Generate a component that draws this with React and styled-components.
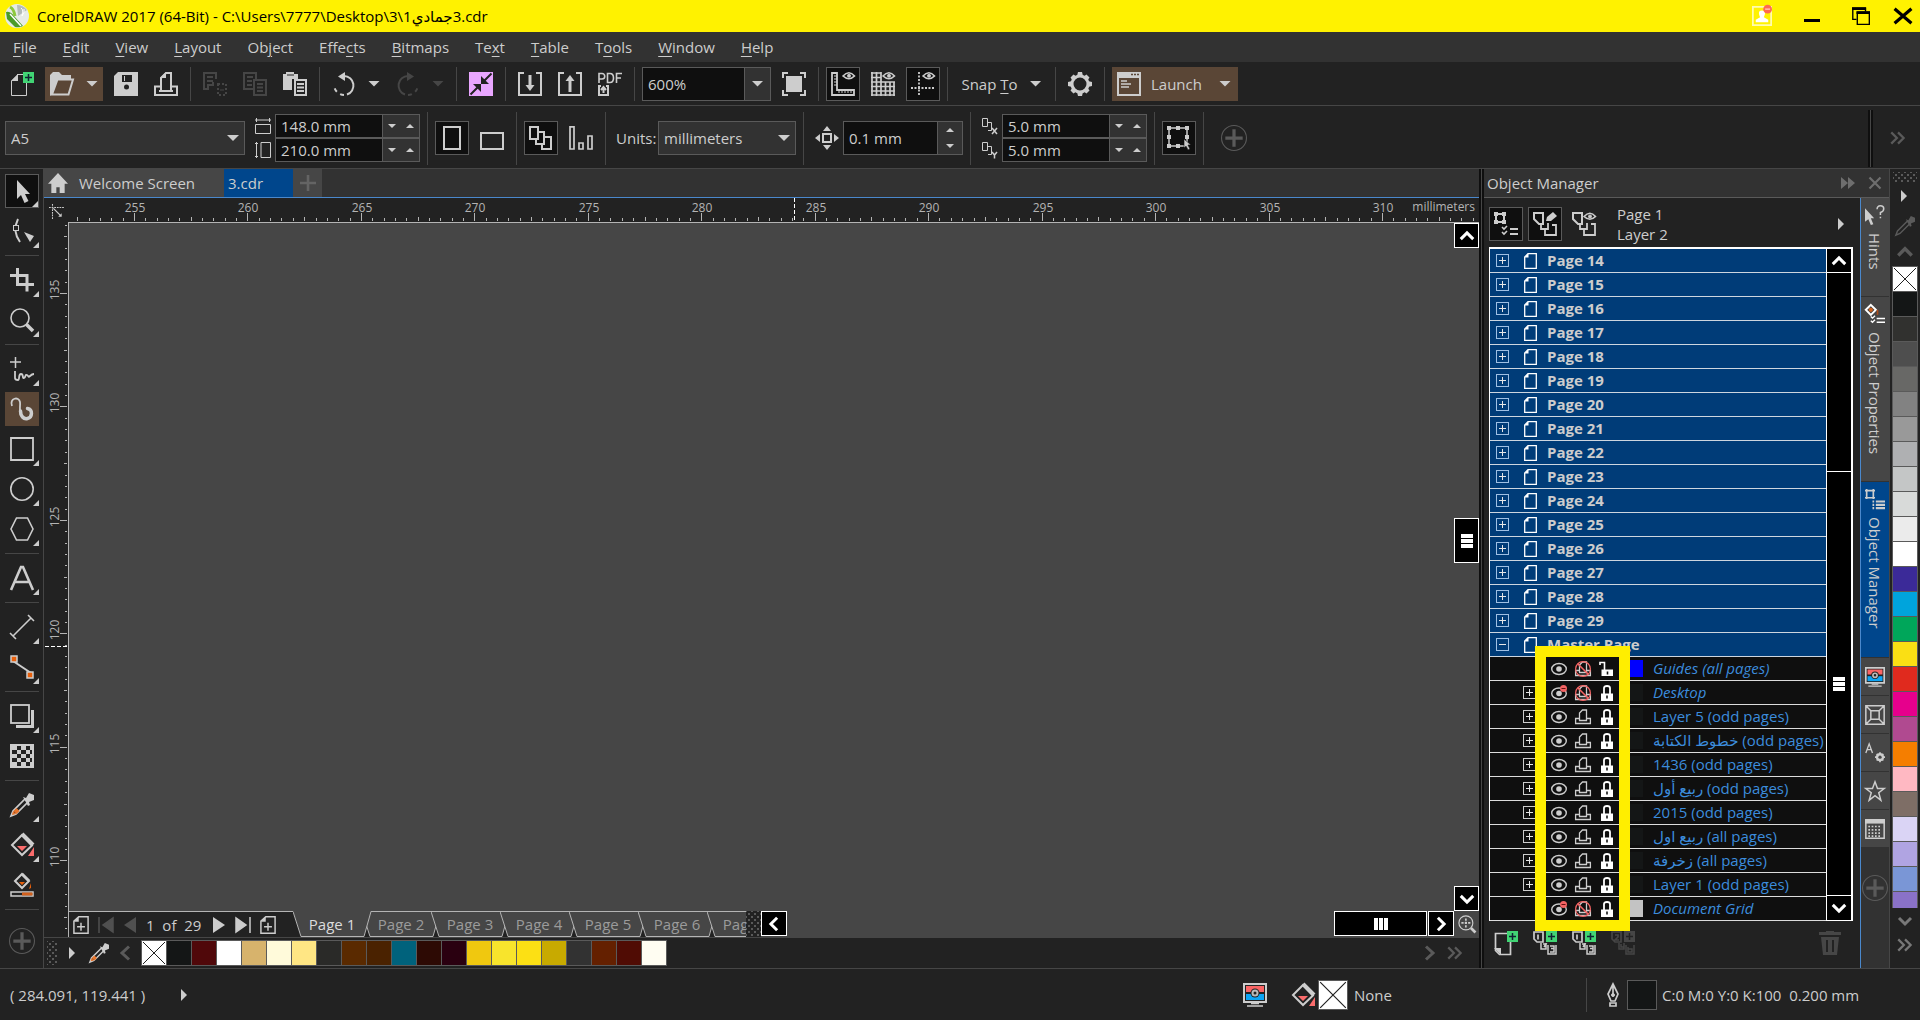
import React from 'react'
import { useState } from 'react'
import styled, { createGlobalStyle, css } from 'styled-components'

// ---- data ----
const menus = [
  ['', 'F', 'ile'], ['', 'E', 'dit'], ['', 'V', 'iew'], ['', 'L', 'ayout'],
  ['Ob', 'j', 'ect'], ['Effe', 'c', 'ts'], ['', 'B', 'itmaps'], ['Te', 'x', 't'],
  ['', 'T', 'able'], ['T', 'o', 'ols'], ['', 'W', 'indow'], ['', 'H', 'elp'],
]

const pages = [14, 15, 16, 17, 18, 19, 20, 21, 22, 23, 24, 25, 26, 27, 28, 29]

const layers = [
  { name: 'Guides', scope: '(all pages)', italic: true, noPrint: true, unlocked: true, leaf: true, color: '#0000ff' },
  { name: 'Desktop', scope: '', italic: true, hidden: true, noPrint: true },
  { name: 'Layer 5', scope: '(odd pages)' },
  { name: 'خطوط الكتابة', scope: '(odd pages)' },
  { name: '1436', scope: '(odd pages)' },
  { name: 'ربيع أول', scope: '(odd pages)' },
  { name: '2015', scope: '(odd pages)' },
  { name: 'ربيع اول', scope: '(all pages)' },
  { name: 'زخرفة', scope: '(all pages)' },
  { name: 'Layer 1', scope: '(odd pages)' },
  { name: 'Document Grid', scope: '', italic: true, hidden: true, noPrint: true, leaf: true, color: '#c3c3c3' },
]

const documentColors = [
  '#141616', '#50080a', '#ffffff', '#d7b36c', '#fffada', '#ffe684', '#2a2a28',
  '#5a2a00', '#4a2200', '#00627c', '#2d0a04', '#2a0010', '#f0c80f', '#f8e42c', '#fce014',
  '#c8aa00', '#323232', '#642000', '#500c04', '#fffdf2',
]

const paletteColors = [
  '#141616', '#31312f', '#4e4e4e', '#686866', '#828282', '#999999', '#afb0b2', '#c4c6c6',
  '#d8dad9', '#ebebeb', '#ffffff', '#3b2a98', '#00a4dc', '#00a65a', '#fadf14', '#e02a1e',
  '#e6008c', '#b04a90', '#f57e00', '#ffb8c2', '#7e6e66', '#dad4f5', '#b0a4e2', '#7a96d6', '#8a72c8',
]

// ---- icons, drawn on a 24 grid unless listed in small ----
const icons = {
  newDoc: <><path d="M7 2.5h7M14 2.5H8L1.5 9v14.5h15V11" /><path d="M1 9l7-7v7z" fill="currentColor" stroke="none" /><rect x="13" y="0" width="11" height="11" fill="#41d474" stroke="none" /><path d="M18.5 2v7M15 5.500h7" stroke="#123" strokeWidth="1.500" /></>,
  open: <><path d="M0 24V3l3-3h6l3 3h9v4" fill="currentColor" stroke="none" /><path d="M2 22.500L7.500 7.500H23L18.500 22.500z" fill="#5a4636" strokeWidth="2" /></>,
  save: <><path d="M4 0h20v24H0V4z" fill="currentColor" stroke="none" /><path d="M8 3h10v7H8z" fill="#222" stroke="none" /><path d="M10.500 4v5" /><circle cx="12.500" cy="15" r="2.500" fill="#222" stroke="none" /></>,
  print: <><path d="M6 14.500H1V23h22v-8.500h-5M5 19h14" strokeWidth="2" /><path d="M7 18V6l5-5h5v17" strokeWidth="2" /><path d="M6 6l6-6v6z" fill="currentColor" stroke="none" /></>,
  cut: <><path d="M13 7V1H1v16h4V13h5v-3M4 5h6M4 9h6" strokeWidth="2" /><path d="M15 12h8v11h-8z" strokeDasharray="2 2" strokeWidth="2" /><path d="M17 18h4" /></>,
  copy: <><path d="M13 7V1H1v16h9M4 5h6M4 9h5M4 13h5" strokeWidth="2" /><path d="M11 8h12v15H11zM14 12h6M14 15.500h6M14 19h6" strokeWidth="2" /></>,
  paste: <><path d="M0 2h3V0h8v2h4v5H9v11H0z" fill="currentColor" stroke="none" /><path d="M4 3h7" stroke="#222" /><path d="M12 8h11v15H12zM14 12h7M14 15.500h7M14 19h7" strokeWidth="2" /></>,
  undo: <><path d="M12 4A9.500 9.500 0 0 1 15 22.500" strokeWidth="2" /><path d="M12 23A10.500 10.500 0 0 1 2 13" strokeWidth="2" strokeDasharray="4 4" /><path d="M6 4.500L13 0v9z" fill="currentColor" stroke="none" /></>,
  redo: <><path d="M12 4A9.500 9.500 0 0 0 9 22.500" strokeWidth="2" /><path d="M12 23A10.500 10.500 0 0 0 22 13" strokeWidth="2" strokeDasharray="4 4" /><path d="M18 4.500L11 0v9z" fill="currentColor" stroke="none" /></>,
  search: <><rect width="24" height="24" fill="#e9a6ff" stroke="none" /><path d="M22.500 1.500L15 9M1.500 22.500L9 15" stroke="#222" strokeWidth="2" /><path d="M12 4v8h8zM12 20v-8H4z" fill="#222" stroke="none" /></>,
  import: <><path d="M6 1H1v22h22V1h-5" strokeWidth="2" /><path d="M12 3v12" strokeWidth="3" /><path d="M7.500 13h9L12 19z" fill="currentColor" stroke="none" /></>,
  export: <><path d="M6 1H1v22h22V1h-5" strokeWidth="2" /><path d="M12 8v12" strokeWidth="3" /><path d="M7.500 9h9L12 3z" fill="currentColor" stroke="none" /></>,
  pdf: <><path d="M1 11V1.500h3a2.500 2.500 0 0 1 0 5.500H1M9.500 1.500h2.500c2 0 3.500 1.500 3.500 4.500s-1.500 4.500-3.500 4.500H9.500zM18.500 11V1.500H24M18.500 6H23" strokeWidth="1.600" /><path d="M3 14H1v9h9v-9H8M5.500 16v5M3 18l2.500-3L8 18" strokeWidth="2" /></>,
  fullscreen: <><path d="M1 6V1h5M18 1h5v5M23 18v5h-5M6 23H1v-5" strokeWidth="2" /><path d="M4 4h16v16H4z" fill="currentColor" stroke="none" /></>,
  rulers: <><path d="M1 1h5v17h17v5H1z" strokeWidth="1.800" /><path d="M3 4h3M3 7h3M3 10h3M3 13h3M8 18v3M11 18v3M14 18v3M17 18v3M20 18v3" /><path d="M12 4Q18 -2.500 23.500 4Q18 9.500 12 4z" strokeWidth="1.600" /><circle cx="18" cy="3.700" r="1.500" fill="currentColor" /></>,
  grid: <><path d="M1 0v24M5.500 0v24M10 0v24M14.500 10v14M19 10v14M23 10v14M0 1h10M0 5.500h10M0 10h24M0 14.500h24M0 19h24M0 23h24" strokeWidth="1.700" /><path d="M12 4Q18 -2.500 23.500 4Q18 9.500 12 4z" strokeWidth="1.600" /><circle cx="18" cy="3.700" r="1.500" fill="currentColor" /></>,
  guides: <><path d="M8 0v24M0 16h24" strokeWidth="1.800" strokeDasharray="2 1.500" /><path d="M12 4Q18 -2.500 23.500 4Q18 9.500 12 4z" strokeWidth="1.600" /><circle cx="18" cy="3.700" r="1.500" fill="currentColor" /></>,
  gear: <><circle cx="12" cy="12" r="8" strokeWidth="3" /><path d="M10 0h4l1 4H9zM10 24h4l1-4H9zM0 10v4l4 1V9zM24 10v4l-4 1V9zM2.500 5.500l3-3 3 2-4 4zM21.500 5.500l-3-3-3 2 4 4zM2.500 18.500l3 3 3-2-4-4zM21.500 18.500l-3 3-3-2 4-4z" fill="currentColor" stroke="none" /></>,
  launch: <><path d="M1 1h22v22H1z" strokeWidth="2" /><path d="M1 4h22" strokeWidth="4" /><path d="M14 2.500h2M17 2.500h2M20 2.500h2" stroke="#5a4636" strokeWidth="1.500" /><path d="M4 9h6M4 12h10M4 15h8" strokeWidth="1.600" /></>,
  portrait: <path d="M4 1h16v22H4z" strokeWidth="2" />,
  landscape: <path d="M1 7h22v16H1z" strokeWidth="2" />,
  allPages: <><path d="M1 1h8v12H1z" strokeWidth="2" /><path d="M9 6h6v12H7v-5" strokeWidth="2" /><path d="M15 11h7v12h-9v-5" strokeWidth="2" /></>,
  curPage: <path d="M1 .900h4v22.100H1zM10 17h4v6h-4zM19 10h4v13h-4z" strokeWidth="1.700" />,
  nudge: <><path d="M8 8h8v8H8z" strokeWidth="2" /><path d="M12 0l4 5H8zM12 24l4-5H8zM0 12l5-4v8zM24 12l-5-4v8z" fill="currentColor" stroke="none" /></>,
  treat: <><path d="M2 2h18v18H2z" strokeWidth="1.500" /><path d="M0 0h4v4H0zM9 0h4v4H9zM18 0h4v4h-4zM0 9h4v4H0zM18 9h4v4h-4zM0 18h4v4H0zM9 18h4v4H9z" fill="currentColor" stroke="none" /><path d="M17 13v9l2-2 2 4 2-1-2-4h3z" fill="currentColor" stroke="#0f0f0f" strokeWidth=".6" /></>,
  plusCircle: <><circle cx="12" cy="12" r="11.500" /><path d="M12 4v16M4 12h16" strokeWidth="3" /></>,
  pick: <path d="M7 1v19l4-4 3.500 8 4-2-3.500-7h5z" fill="currentColor" stroke="none" />,
  shape: <><path d="M8 0Q2 12 10 23" strokeWidth="2" /><rect x="3.500" y="6.500" width="5" height="5" fill="#222" /><path d="M14 13l10 4-4 6z" fill="currentColor" stroke="none" /></>,
  crop: <path d="M0 7.500h17v16M7.500 0v16.500H24" strokeWidth="3" />,
  zoom: <><circle cx="10" cy="10" r="9" strokeWidth="1.600" /><path d="M16.500 16.500l6.500 6.500" strokeWidth="3.500" /></>,
  freehand: <><path d="M0 5h11M5.500 0v11" strokeWidth="1.500" /><path d="M5 14v7q0 2 3 2c2 0 0-6 3-6s1 5 3 4 1-4 3-3 1 3 3 1 2-2 4-2" strokeWidth="1.800" /></>,
  artistic: <><path d="M2 9C-1 1 9-1 10 5c.7 5-1.500 9 1 14" strokeWidth="1.800" /><path d="M10.500 14c0 5 3 8.500 7 7.500 5-1 5.500-9 0-10" strokeWidth="3.500" strokeLinecap="round" /></>,
  rect: <path d="M1 1h22v22H1z" strokeWidth="1.800" />,
  ellipse: <circle cx="12" cy="12" r="11.200" strokeWidth="1.600" />,
  polygon: <path d="M6.500 1h11L23 12l-5.500 11h-11L1 12z" strokeWidth="1.600" />,
  text: <path d="M1 24L11 1h2l10 23M5 16h14" strokeWidth="2.600" />,
  dimension: <path d="M3 21L21 3M0 18l6 6M18 0l6 6" strokeWidth="1.600" />,
  connector: <><path d="M3 6l18 12" strokeWidth="2" /><path d="M1 1h6v6H1zM17 17h6v6h-6z" fill="#e8600c" strokeWidth="1.500" /></>,
  shadow: <><path d="M22.500 6v16.500H6" strokeWidth="3" /><rect x="1" y="1" width="18" height="18" fill="#222" strokeWidth="1.800" /></>,
  checker: <><path d="M1 1h22v22H1z" strokeWidth="2" /><path d="M7 2h4v4H7zM16 2h4v4h-4zM2 6h5v4H2zM11 6h5v4h-5zM20 6h2v4h-2zM7 10h4v4H7zM16 10h4v4h-4zM2 14h5v4H2zM11 14h5v4h-5zM20 14h2v4h-2zM7 18h4v4H7zM16 18h4v4h-4z" fill="#222" stroke="none" /><path d="M2 2h5v4H2zM11 2h5v4h-5zM20 2h2v4h-2zM7 6h4v4H7zM16 6h4v4h-4zM2 10h5v4H2zM11 10h5v4h-5zM20 10h2v4h-2zM7 14h4v4H7zM16 14h4v4h-4zM2 18h5v4H2zM11 18h5v4h-5zM20 18h2v4h-2z" fill="currentColor" stroke="none" /></>,
  dropper: <><path d="M1 23l2-5L15 6l3 3L6 21z" strokeWidth="1.700" /><path d="M2 22l1-4 3 3z M3.500 18l3-3 3 3-3 3z" fill="#e8742a" stroke="none" /><path d="M13 4l3 1 3-5 5 2v5l-5 2 1 3-2 1z" fill="currentColor" stroke="none" /></>,
  dropperDim: <><path d="M1 23l2-5L15 6l3 3L6 21z" strokeWidth="1.700" /><path d="M13 4l3 1 3-5 5 2v5l-5 2 1 3-2 1z" fill="currentColor" stroke="none" /></>,
  fill: <><path d="M12 2L22 12.500 12 22 2 12z" strokeWidth="2" /><path d="M12 1l11 11" strokeWidth="4" /><path d="M7 13h10l-5 5zM18 23h6v-9z" fill="#fa6c6c" stroke="none" /></>,
  smartFill: <><path d="M12 1l7 7-7 7-7-7z" strokeWidth="2" /><path d="M12 1l7 7" strokeWidth="3" /><path d="M9 9h6l-3 3zM19 16l2-6v5z" fill="#e8600c" stroke="none" /><path d="M1 19h22v4H1z" strokeWidth="1.500" /><path d="M12 19.500h10.500v3H12z" fill="#d2601c" stroke="none" /></>,
  home: <path d="M0 13L12 0l12 13h-4v11h-6v-7h-4v7H4V13z" fill="currentColor" stroke="none" />,
  objProps: <><path d="M2 2h8v8H2z" strokeWidth="2" /><path d="M0 0h4v4H0zM8 0h4v4H8zM0 8h4v4H0zM8 8h4v4H8z" fill="currentColor" stroke="none" /><path d="M8 15l2 2 3-3M8 20l2 2 3-3" strokeWidth="1.600" /><path d="M16 17h8M16 22h8" strokeWidth="1.800" /></>,
  editLayers: <><path d="M1 1h9v11H6l-5-5z" strokeWidth="2" /><path d="M8 12v5h7v-6M12 18v5h11V13h-4" strokeWidth="1.800" /><path d="M13 9l1-4 6-5 4 4-6 5z" fill="currentColor" stroke="none" /></>,
  viewLayers: <><path d="M1 1h9v11H6l-5-5z" strokeWidth="2" /><path d="M8 12v5h7v-6M12 18v5h11V12h-4" strokeWidth="1.800" /><path d="M12 4.500Q18 -2 23.500 4.500Q18 10 12 4.500z" fill="#222" strokeWidth="1.600" /><circle cx="18" cy="4.500" r="1.500" fill="currentColor" /></>,
  newLayer: <><path d="M13 2.500H1.500v17l4 4h11V11" strokeWidth="1.700" /><path d="M0 17h7v7z" fill="currentColor" stroke="none" /><rect x="13" y="0" width="11" height="11" fill="#41d474" stroke="none" /><path d="M18.500 2v7M15 5.500h7" stroke="#123" strokeWidth="1.500" /></>,
  newMaster: <><path d="M1 1h9v10H4l-3-3zM5 3.500v5" strokeWidth="1.700" /><path d="M8 12v6h5v-6M10 13h3l-2 3" strokeWidth="1.500" /><path d="M15 14v9h8v-9M17 15h4v2.500h-3M21 17.500V21h-4" strokeWidth="1.500" /><rect x="13" y="0" width="11" height="11" fill="#41d474" stroke="none" /><path d="M18.500 2v7M15 5.500h7" stroke="#123" strokeWidth="1.500" /></>,
  newMasterDim: <><path d="M1 1h9v10H4l-3-3zM4 4h3v2L4 9h4" strokeWidth="1.700" /><path d="M8 12v6h5v-6M10 13v3h3" strokeWidth="1.500" /><path d="M15 14v9h8v-9M17 16v5h4v-3h-4" strokeWidth="1.500" /><path d="M13 0h11v11H13z" fill="currentColor" stroke="none" /><path d="M18.500 2v7M15 5.500h7" stroke="#222" strokeWidth="1.500" /></>,
  trash: <><path d="M1 1h22v3H1zM8 0h8v2H8z" fill="currentColor" stroke="none" /><path d="M3 6h18l-2 18H5z" fill="currentColor" stroke="none" /><path d="M9 9v12M15 9v12" stroke="#222" strokeWidth="2" /></>,
  hints: <><path d="M0 4v16l4-3 3 7 3-1-3-7h4z" fill="currentColor" stroke="none" /><path d="M14.500 5q0-4 4-4t4 3.500-4 4.500v3M18.500 14v2" strokeWidth="1.800" /></>,
  propsDocker: <><path d="M7 1l6 6-6 6-6-6z" strokeWidth="2.400" stroke="#fff" /><circle cx="7" cy="7" r="2.500" fill="#d2601c" stroke="none" /><path d="M15 7v6" stroke="#a84c1c" strokeWidth="2" /><path d="M7 15l2 2 3-3M7 20l2 2 3-3" strokeWidth="1.600" stroke="#fff" /><path d="M14 17.500h10M14 22h10" strokeWidth="1.800" stroke="#fff" /></>,
  objDocker: <><path d="M2 0v12M10 0v12M0 2h12M0 10.500h12" strokeWidth="2" /><path d="M9 15h2M9 19h2M9 23h2M13 15h11M13 19h11M13 23h11" strokeWidth="2.600" /></>,
  monitor: <><path d="M1 1h22v18H1z" fill="#222" strokeWidth="2" /><path d="M3 3h18v6H3z" fill="#fa6464" stroke="none" /><path d="M3 11h18v6H3z" fill="#0ca4f4" stroke="none" /><circle cx="12" cy="10" r="4.500" fill="#222" stroke="none" /><circle cx="12" cy="10" r="2.500" strokeWidth="2" stroke="#bbb" /><path d="M8 20.500h8M4 23h16" strokeWidth="1.500" /></>,
  bevel: <path d="M1 1h22v22H1zM7 7h10v10H7zM1 1l6 6M23 1l-6 6M1 23l6-6M23 23l-6-6" strokeWidth="1.800" />,
  textGear: <><path d="M1 12L5 1l4 11M2 8h6" strokeWidth="1.600" /><circle cx="18" cy="17" r="3.500" strokeWidth="3" /><path d="M18 11v12M12 17h12M14 13l8 8M22 13l-8 8" strokeWidth="2" /><circle cx="18" cy="17" r="2" fill="#464646" stroke="none" /></>,
  star: <path d="M12 1l3 8h8l-6.500 5 2.500 9-7-5.500L5 23l2.500-9L1 9h8z" strokeWidth="1.800" />,
  table: <><path d="M1 1h22v22H1z" strokeWidth="1.800" /><path d="M0 3h24" strokeWidth="5" /><path d="M4 9h16M4 13h16M4 17h16M4 20.500h16" strokeWidth="2" strokeDasharray="2 2" /></>,
  pen: <><path d="M12 1L7 11l3 7h4l3-7zM12 2v10M9 20h6v3H9z" strokeWidth="1.700" /><circle cx="12" cy="12" r="1.500" fill="currentColor" /></>,
  // 16 grid
  pageWidth: <path d="M0 2h16M1.500 0v4M14.500 0v4M.500 6.500h15v9H.500z" />,
  pageHeight: <path d="M1.500 0v16M0 1.500h3M0 14.500h3M6 .500h9.500v15H6z" />,
  dupX: <><path d="M.500 .500h5v8h-5zM5.500 4.500h4v8H6" /><path d="M10 10l5 6M15 10l-5 6" strokeWidth="1.500" /></>,
  dupY: <><path d="M.500 .500h5v8h-5zM5.500 4.500h4v8H6" /><path d="M10 10l2.500 3L15 10M12.500 13v3.500" strokeWidth="1.500" /></>,
  eye: <><ellipse cx="8" cy="8" rx="7.300" ry="5.500" strokeWidth="1.400" /><circle cx="8" cy="8" r="2.800" fill="currentColor" stroke="none" /></>,
  eyeOff: <><ellipse cx="8" cy="8.500" rx="7.300" ry="5.500" strokeWidth="1.400" /><circle cx="8" cy="8.500" r="2.800" fill="currentColor" stroke="none" /><circle cx="12.500" cy="3.500" r="3.500" fill="#f46464" stroke="none" /><path d="M10.500 3.500h4" stroke="#611" /></>,
  layerPrint: <path d="M4 9.500H.600v5h14.800v-5H12M4.500 11.500V4l3-3h4v10.500z" strokeWidth="1.300" />,
  layerNoPrint: <><path d="M4 9.500H.600v5h14.800v-5H12M4.500 11.500V4l3-3h4v10.500z" strokeWidth="1.300" /><circle cx="8" cy="8" r="7.400" stroke="#f46464" strokeWidth="1.200" /><path d="M3 3l10 10" stroke="#f46464" strokeWidth="1.600" /></>,
  lock: <><path d="M5 9V3q0-2 3-2t3 2v6" stroke="#fff" strokeWidth="1.800" /><path d="M2 8.500h12V16H2z" fill="#fff" stroke="none" /><path d="M8 10.500v3" stroke="#111" strokeWidth="1.600" /></>,
  unlock: <><path d="M1 4V1.500h4.500V9" stroke="#fff" strokeWidth="1.600" /><path d="M2.500 8.500H14V15H2.500z" fill="#fff" stroke="none" /><path d="M8.500 10.500v3" stroke="#111" strokeWidth="1.600" /></>,
  page: <><path d="M5 .700h8.300v14.600H1.700V4z" strokeWidth="1.300" stroke="#fff" /><path d="M1.500 4.500l4-4v4z" fill="#fff" stroke="none" /></>,
  addPage: <><path d="M6 .700h8.300v14.600H1.700V4.500zM8 6v7M4.500 9.500h7" strokeWidth="1.300" /><path d="M1.500 5l4.500-4.500V5z" fill="currentColor" stroke="none" /></>,
  first: <path d="M1 0v16M15 1v14L5 8z" fill="currentColor" strokeWidth="1.500" />,
  prev: <path d="M14 0v16L2 8z" fill="currentColor" stroke="none" />,
  next: <path d="M2 0v16l12-8z" fill="currentColor" stroke="none" />,
  last: <path d="M15 0v16M1 1v14l10-7z" fill="currentColor" strokeWidth="1.500" />,
  up: <path d="M3 10.500l5-5 5 5" strokeWidth="2.400" />,
  down: <path d="M3 5.500l5 5 5-5" strokeWidth="2.400" />,
  left: <path d="M10.500 3l-5 5 5 5" strokeWidth="2.400" />,
  right: <path d="M5.500 3l5 5-5 5" strokeWidth="2.400" />,
  bigUp: <path d="M2 12l6-6 6 6" strokeWidth="3" />,
  bigDown: <path d="M2 4l6 6 6-6" strokeWidth="3" />,
  bigLeft: <path d="M12 1.500L5 8l7 6.500" strokeWidth="3" />,
  bigRight: <path d="M4 1.500L11 8l-7 6.500" strokeWidth="3" />,
  dbl: <path d="M2 3l5 5-5 5M8 3l5 5-5 5" strokeWidth="2" />,
  collapse: <path d="M1 2v12l7-6zM8 2v12l7-6z" fill="currentColor" stroke="none" />,
  close: <path d="M2.500 2.500l11 11M13.500 2.500l-11 11" strokeWidth="2.200" />,
  play: <path d="M4 2l6 6-6 6z" fill="currentColor" stroke="none" />,
  magnifier: <><circle cx="7" cy="7" r="6.200" /><path d="M11.500 11.500l4 4" strokeWidth="2.400" /><path d="M7 3v8M3 7h8" strokeWidth="1.500" strokeDasharray="2 1" /></>,
  plus: <path d="M8 0v16M0 8h16" strokeWidth="2.600" />,
  origin: <><path d="M4 0v18M0 4h18" strokeWidth="1.200" strokeDasharray="2 1" /><path d="M5 5l8 8" strokeWidth="1.500" /><path d="M14.500 14.500v-4l-4 4z" fill="currentColor" stroke="none" /></>,
  user: <><path d="M.700 .700h14.600v14.600H.700z" stroke="#fffbb0" strokeWidth="1.400" /><path d="M8 3.500c4 0 2 4 1.500 5.500l3.500 2V13H3v-2l3.500-2C6 7.500 4 3.500 8 3.500z" fill="#fff" stroke="none" /><circle cx="12.500" cy="2.500" r="3.500" fill="#ff6a50" stroke="none" /><path d="M10.500 2.500h4" stroke="#ffd0c0" /></>,
  minimize: <path d="M0 12.500h16" strokeWidth="3" />,
  restore: <><path d="M4 11H.700V1H12v3" strokeWidth="1.200" /><path d="M0 1.500h12.500M4 5h12" strokeWidth="2.500" /><path d="M4.700 4.700h10.700v10.700H4.700z" strokeWidth="1.200" /></>,
  winClose: <path d="M.500 1.500l15 13M15.500 1.500l-15 13" strokeWidth="2.800" />,
}

const small = ['pageWidth', 'pageHeight', 'dupX', 'dupY', 'eye', 'eyeOff', 'layerPrint', 'layerNoPrint', 'lock', 'unlock',
  'page', 'addPage', 'first', 'prev', 'next', 'last', 'up', 'down', 'left', 'right', 'bigUp', 'bigDown', 'bigLeft', 'bigRight',
  'dbl', 'collapse', 'close', 'play', 'magnifier', 'plus', 'origin', 'user', 'minimize', 'restore', 'winClose']

const Icon = ({ name, size = 24 }) => (
  <Svg viewBox={small.includes(name) ? '0 0 16 16' : '0 0 24 24'} $size={size} aria-hidden="true">{icons[name]}</Svg>
)

// ---- small pieces ----
const Tool = ({ icon, label, active, hot, dim, flyout, size }) => (
  <ToolButton type="button" aria-label={label} $active={active} $hot={hot} $dim={dim} $flyout={flyout}>
    <Icon name={icon} size={size} />
  </ToolButton>
)

const Spin = ({ label, value, width = 107, stacked }) => {
  const [text, setText] = useState(value)
  return (
    <SpinBox>
      <SpinInput aria-label={label} value={text} $width={width} onChange={e => setText(e.target.value)} />
      <SpinButtons $stacked={stacked}>
        <button type="button" aria-label={`${label} down`}><Caret $small /></button>
        <button type="button" aria-label={`${label} up`}><Caret $small $up /></button>
      </SpinButtons>
    </SpinBox>
  )
}

const NoColor = () => (
  <CrossSvg viewBox="0 0 24 24" aria-hidden="true"><path d="M1 1l22 22M23 1L1 23" /></CrossSvg>
)

// ---- rulers: 5 mm are 113.45 px at this zoom ----
const STEP = 113.45

const HRuler = () => {
  const ticks = []
  for (let i = -5; i < 170; i++) {
    const x = Math.round(65 + (i * STEP) / 10)
    const len = i % 10 === 0 ? 8 : i % 5 === 0 ? 4 : 3
    ticks.push(<rect key={i} x={x} y={23 - len} width="1" height={len} />)
  }
  const labels = [255, 260, 265, 270, 275, 280, 285, 290, 295, 300, 305, 310]
  return (
    <HRulerBox>
      <RulerSvg>
        {ticks}
        {labels.map((n, i) => <text key={n} x={Math.round(66 + i * STEP)} y="14" textAnchor="middle">{n}</text>)}
        <line x1="725.500" x2="725.500" y1="0" y2="24" />
      </RulerSvg>
      <RulerUnit>millimeters</RulerUnit>
    </HRulerBox>
  )
}

const VRuler = () => {
  const ticks = []
  for (let i = -6; i < 57; i++) {
    const y = Math.round(70 + (i * STEP) / 10)
    const len = i % 10 === 0 ? 7 : i % 5 === 0 ? 3 : 2
    ticks.push(<rect key={i} x={23 - len} y={y} width={len} height="1" />)
  }
  return (
    <VRulerBox>
      <RulerSvg>
        {ticks}
        {[135, 130, 125, 120, 115, 110].map((n, i) => (
          <text key={n} textAnchor="middle" transform={`translate(15 ${Math.round(67 + i * STEP)}) rotate(-90)`}>{n}</text>
        ))}
        <line x1="1" x2="23" y1="423.500" y2="423.500" />
      </RulerSvg>
    </VRulerBox>
  )
}

const TitleBar = () => (
  <Title>
    <Svg viewBox="0 0 24 24" $size={24} aria-hidden="true">
      <ellipse cx="12" cy="12" rx="12" ry="12" fill="#e6ebe6" stroke="none" />
      <path d="M12 1l1 11 9-6Q18 1 12 1z" fill="#b4bcb8" stroke="none" />
      <path d="M16 4q3 2 1 8M19 5q1 3-2 7" stroke="#fff" />
      <path d="M1 8q4-1 8 4l9 10q-4 2-8 1L2 15z" fill="#4a9c28" stroke="none" />
      <path d="M5 10l11 12" stroke="#fff" strokeWidth="1.500" />
      <path d="M5 3q4 2 5 9" stroke="#8cc83c" strokeWidth="3" />
    </Svg>
    <TitleText>CorelDRAW 2017 (64-Bit) - C:\Users\7777\Desktop\3\1<bdi>جمادي</bdi>3.cdr</TitleText>
    <WindowButtons>
      <button type="button" aria-label="Account"><Icon name="user" size={20} /></button>
      <button type="button" aria-label="Minimize"><Icon name="minimize" size={16} /></button>
      <button type="button" aria-label="Restore"><Icon name="restore" size={18} /></button>
      <button type="button" aria-label="Close"><Icon name="winClose" size={18} /></button>
    </WindowButtons>
  </Title>
)

const StandardBar = () => (
  <Bar>
    <Tool icon="newDoc" label="New" />
    <WideButton type="button" aria-label="Open" $hot><Icon name="open" /><Caret /></WideButton>
    <Tool icon="save" label="Save" />
    <Tool icon="print" label="Print" />
    <Sep />
    <Tool icon="cut" label="Cut" dim />
    <Tool icon="copy" label="Copy" dim />
    <Tool icon="paste" label="Paste" />
    <Sep />
    <WideButton type="button" aria-label="Undo"><Icon name="undo" /><Caret /></WideButton>
    <WideButton type="button" aria-label="Redo" $dim><Icon name="redo" /><Caret /></WideButton>
    <Sep />
    <Tool icon="search" label="Search content" />
    <Sep />
    <Tool icon="import" label="Import" />
    <Tool icon="export" label="Export" />
    <Tool icon="pdf" label="Publish to PDF" />
    <Sep />
    <ZoomBox>
      <input aria-label="Zoom level" defaultValue="600%" />
      <button type="button" aria-label="Zoom levels"><Caret /></button>
    </ZoomBox>
    <Tool icon="fullscreen" label="Full-screen preview" />
    <Sep />
    <Tool icon="rulers" label="Show rulers" active />
    <Tool icon="grid" label="Show grid" />
    <Tool icon="guides" label="Show guidelines" active />
    <Sep />
    <SnapButton type="button"><span>Snap <u>T</u>o</span><Caret /></SnapButton>
    <Sep />
    <Tool icon="gear" label="Options" />
    <Sep />
    <LaunchButton type="button"><Icon name="launch" /><span>Launch</span><Caret /></LaunchButton>
  </Bar>
)

const PropertyBar = () => (
  <PropBar>
    <SelectBox $width={240}>
      <select aria-label="Page size"><option>A5</option></select>
      <Caret />
    </SelectBox>
    <PairGrid>
      <Icon name="pageWidth" size={16} />
      <Spin label="Page width" value="148.0 mm" />
      <Icon name="pageHeight" size={16} />
      <Spin label="Page height" value="210.0 mm" />
    </PairGrid>
    <Sep $tall />
    <Tool icon="portrait" label="Portrait" active />
    <Tool icon="landscape" label="Landscape" />
    <Sep $tall />
    <Tool icon="allPages" label="All pages" active />
    <Tool icon="curPage" label="Current page" />
    <Sep $tall />
    <UnitsLabel>
      Units:
      <SelectBox $width={138}>
        <select><option>millimeters</option></select>
        <Caret />
      </SelectBox>
    </UnitsLabel>
    <Sep $tall />
    <NudgeBox>
      <Icon name="nudge" />
      <Spin label="Nudge distance" value="0.1 mm" width={94} stacked />
    </NudgeBox>
    <Sep $tall />
    <PairGrid>
      <Icon name="dupX" size={16} />
      <Spin label="Duplicate distance x" value="5.0 mm" />
      <Icon name="dupY" size={16} />
      <Spin label="Duplicate distance y" value="5.0 mm" />
    </PairGrid>
    <Sep $tall />
    <Tool icon="treat" label="Treat as filled" active />
    <Sep $tall />
    <AddTool type="button" aria-label="Customize"><Icon name="plusCircle" size={26} /></AddTool>
    <BarEnd><Splitter $short /><Icon name="dbl" size={18} /></BarEnd>
  </PropBar>
)

const Toolbox = () => (
  <ToolboxBar>
    <Tool icon="pick" label="Pick" active flyout />
    <Tool icon="shape" label="Shape" flyout />
    <HSep />
    <Tool icon="crop" label="Crop" flyout />
    <Tool icon="zoom" label="Zoom" flyout />
    <HSep />
    <Tool icon="freehand" label="Freehand" flyout />
    <Tool icon="artistic" label="Artistic media" hot />
    <Tool icon="rect" label="Rectangle" flyout />
    <Tool icon="ellipse" label="Ellipse" flyout />
    <Tool icon="polygon" label="Polygon" flyout />
    <HSep />
    <Tool icon="text" label="Text" flyout />
    <HSep />
    <Tool icon="dimension" label="Dimension" flyout />
    <Tool icon="connector" label="Connector" flyout />
    <HSep />
    <Tool icon="shadow" label="Drop shadow" flyout />
    <Tool icon="checker" label="Transparency" />
    <HSep />
    <Tool icon="dropper" label="Color eyedropper" flyout />
    <Tool icon="fill" label="Interactive fill" flyout />
    <Tool icon="smartFill" label="Smart fill" />
    <HSep />
    <AddTool type="button" aria-label="Customize toolbox" $vertical><Icon name="plusCircle" size={26} /></AddTool>
  </ToolboxBar>
)

const PageBar = () => (
  <PageRow>
    <PageNav>
      <button type="button" aria-label="Add page before"><Icon name="addPage" size={18} /></button>
      <button type="button" aria-label="First page" disabled><Icon name="first" size={16} /></button>
      <button type="button" aria-label="Previous page" disabled><Icon name="prev" size={16} /></button>
      <span>1&nbsp; of&nbsp; 29</span>
      <button type="button" aria-label="Next page"><Icon name="next" size={16} /></button>
      <button type="button" aria-label="Last page"><Icon name="last" size={16} /></button>
      <button type="button" aria-label="Add page after"><Icon name="addPage" size={18} /></button>
    </PageNav>
    <PageTabs>
      {[1, 2, 3, 4, 5, 6, 7].map(n => (
        <PageTab key={n} type="button" $active={n === 1}>
          <TabShape viewBox="0 0 79 26" aria-hidden="true">
            <path className="face" d="M0 0L8 25H71L78 0z" />
            <path d="M0 0.500L8 25.500H71L78 0.500" />
            {n !== 1 && <path d="M0 .500H78" />}
          </TabShape>
          <span>Page {n}</span>
        </PageTab>
      ))}
    </PageTabs>
    <Grip $w={15} $h={26} />
    <ScrollButton type="button" aria-label="Scroll left" $wide><Icon name="left" size={20} /></ScrollButton>
    <Spacer $grow={1} />
    <HThumb><i /><i /><i /></HThumb>
    <ScrollButton type="button" aria-label="Scroll right" $wide><Icon name="right" size={20} /></ScrollButton>
    <ZoomCorner type="button" aria-label="Navigator"><Icon name="magnifier" size={18} /></ZoomCorner>
  </PageRow>
)

const ObjectManager = () => (
  <Docker>
    <DockerHead>
      <h2>Object Manager</h2>
      <button type="button" aria-label="Collapse docker"><Icon name="collapse" size={16} /></button>
      <button type="button" aria-label="Close docker"><Icon name="close" size={16} /></button>
    </DockerHead>
    <DockerBody>
      <Panel>
        <PanelTools>
          <Tool icon="objProps" label="Show object properties" active />
          <Tool icon="editLayers" label="Edit across layers" active />
          <Tool icon="viewLayers" label="Layer manager view" />
          <Current>Page 1<br />Layer 2</Current>
          <button type="button" aria-label="Object manager options"><Icon name="play" size={16} /></button>
        </PanelTools>
        <Tree>
          <Rows>
            {pages.map(n => (
              <PageItem key={n}>
                <Expander type="button" aria-label={`Expand page ${n}`} $blue />
                <Icon name="page" size={16} />
                <span>Page {n}</span>
              </PageItem>
            ))}
            <PageItem>
              <Expander type="button" aria-label="Collapse master page" $blue $minus />
              <Icon name="page" size={16} />
              <span>Master Page</span>
            </PageItem>
            {layers.map(layer => (
              <LayerItem key={layer.name} $italic={layer.italic}>
                <Expander type="button" aria-label={`Expand ${layer.name}`} $leaf={layer.leaf} />
                <LayerFlags>
                  <button type="button" aria-label="Visible"><Icon name={layer.hidden ? 'eyeOff' : 'eye'} size={16} /></button>
                  <button type="button" aria-label="Printable"><Icon name={layer.noPrint ? 'layerNoPrint' : 'layerPrint'} size={16} /></button>
                  <button type="button" aria-label="Locked"><Icon name={layer.unlocked ? 'unlock' : 'lock'} size={16} /></button>
                </LayerFlags>
                <LayerColor $color={layer.color || '#141616'} />
                <span><bdi>{layer.name}</bdi> {layer.scope}</span>
              </LayerItem>
            ))}
          </Rows>
          <TreeScroll>
            <button type="button" aria-label="Scroll up"><Icon name="up" size={20} /></button>
            <Spacer $grow={198} />
            <TreeThumb><i /><i /><i /></TreeThumb>
            <button type="button" aria-label="Scroll down"><Icon name="down" size={20} /></button>
          </TreeScroll>
          <Highlight />
        </Tree>
        <PanelFoot>
          <button type="button" aria-label="New layer"><Icon name="newLayer" /></button>
          <button type="button" aria-label="New master layer, all pages"><Icon name="newMaster" /></button>
          <button type="button" aria-label="New master layer, odd pages"><Icon name="newMaster" /></button>
          <button type="button" aria-label="New master layer, even pages" disabled><Icon name="newMasterDim" /></button>
          <button type="button" aria-label="Delete" disabled><Icon name="trash" /></button>
        </PanelFoot>
      </Panel>
      <DockerTabs>
        <SideTab type="button" $height={99}><Icon name="hints" size={20} /><span>Hints</span></SideTab>
        <SideTab type="button" $height={185}><Icon name="propsDocker" size={20} /><span>Object Properties</span></SideTab>
        <SideTab type="button" $height={176} $active><Icon name="objDocker" size={20} /><span>Object Manager</span></SideTab>
        {['monitor', 'bevel', 'textGear', 'star', 'table'].map(name => (
          <SideTab key={name} type="button" aria-label={name} $height={38}><Icon name={name} size={20} /></SideTab>
        ))}
        <AddTool type="button" aria-label="Customize dockers" $docker><Icon name="plusCircle" size={26} /></AddTool>
      </DockerTabs>
    </DockerBody>
  </Docker>
)

const App = () => (
  <Window>
    <Global />
    <TitleBar />
    <MenuBar>
      {menus.map(([a, b, c]) => <button key={a + b + c} type="button">{a}<u>{b}</u>{c}</button>)}
    </MenuBar>
    <StandardBar />
    <PropertyBar />
    <Main>
      <Toolbox />
      <Document>
        <DocTabs>
          <DocTab type="button" $width={180}><Icon name="home" size={20} />Welcome Screen</DocTab>
          <DocTab type="button" $width={69} $active>3.cdr</DocTab>
          <DocTab type="button" $width={29} aria-label="New document" $plus><Icon name="plus" size={16} /></DocTab>
        </DocTabs>
        <RulerRow>
          <Corner><Icon name="origin" size={14} /></Corner>
          <HRuler />
        </RulerRow>
        <Workspace>
          <VRuler />
          <CanvasColumn>
            <Canvas>
              <VScroll>
                <ScrollButton type="button" aria-label="Scroll up"><Icon name="up" size={20} /></ScrollButton>
                <Spacer $grow={270} />
                <VThumb><i /><i /><i /></VThumb>
                <Spacer $grow={323} />
                <ScrollButton type="button" aria-label="Scroll down"><Icon name="down" size={20} /></ScrollButton>
              </VScroll>
            </Canvas>
            <PageBar />
          </CanvasColumn>
        </Workspace>
        <DocPalette>
          <Grip $w={10} $h={24} />
          <button type="button" aria-label="Palette menu"><Icon name="play" size={16} /></button>
          <button type="button" aria-label="Pick color"><Icon name="dropper" size={20} /></button>
          <DimButton type="button" aria-label="Back"><Icon name="bigLeft" size={16} /></DimButton>
          <SwatchRow>
            <Swatch type="button" aria-label="No color" $color="#fff"><NoColor /></Swatch>
            {documentColors.map(c => <Swatch key={c} type="button" aria-label={c} $color={c} />)}
          </SwatchRow>
          <Spacer $grow={1} />
          <DimButton type="button" aria-label="Forward"><Icon name="bigRight" size={16} /></DimButton>
          <DimButton type="button" aria-label="More colors"><Icon name="dbl" size={18} /></DimButton>
        </DocPalette>
      </Document>
      <Splitter />
      <ObjectManager />
      <Palette>
        <Grip $w={24} $h={10} />
        <button type="button" aria-label="Palette menu"><Icon name="play" size={16} /></button>
        <DimButton type="button" aria-label="Pick color" $spaced><Icon name="dropperDim" size={20} /></DimButton>
        <DimButton type="button" aria-label="Scroll up"><Icon name="bigUp" size={18} /></DimButton>
        <SwatchColumn>
          <Swatch type="button" aria-label="No color" $color="#fff"><NoColor /></Swatch>
          {paletteColors.map(c => <Swatch key={c} type="button" aria-label={c} $color={c} />)}
        </SwatchColumn>
        <DimButton type="button" aria-label="Scroll down" $light><Icon name="bigDown" size={16} /></DimButton>
        <DimButton type="button" aria-label="More colors" $light><Icon name="dbl" size={18} /></DimButton>
      </Palette>
    </Main>
    <Status>
      <span>( 284.091, 119.441 )</span>
      <button type="button" aria-label="Status menu"><Icon name="play" size={16} /></button>
      <Spacer $grow={1} />
      <Icon name="monitor" />
      <StatusFill>
        <Icon name="fill" />
        <BigSwatch $color="#fff"><NoColor /></BigSwatch>
        None
      </StatusFill>
      <StatusOutline>
        <Icon name="pen" />
        <BigSwatch $color="#141616" />
        C:0 M:0 Y:0 K:100 &nbsp;0.200 mm
      </StatusOutline>
    </Status>
  </Window>
)

// ---- styles ----
const Global = createGlobalStyle`
  *, *::before, *::after { box-sizing: border-box; }
  body {
    margin: 0;
    background: #222222;
    color: #cdcdcd;
    font: 15px/20px 'Open Sans', 'Noto Sans', 'DejaVu Sans', sans-serif;
  }
  button, input, select {
    margin: 0;
    padding: 0;
    border: 0;
    background: none;
    color: inherit;
    font: inherit;
    border-radius: 0;
  }
  button { display: flex; align-items: center; justify-content: center; }
  u { text-underline-offset: 3px; }
`

const Window = styled.div`
  display: flex;
  flex-direction: column;
  min-height: 100vh;
`

const Svg = styled.svg`
  flex: none;
  display: block;
  width: ${p => p.$size}px;
  height: ${p => p.$size}px;
  fill: none;
  stroke: currentColor;
  overflow: visible;
`

const Spacer = styled.div`
  flex: ${p => p.$grow} 1 0;
`

const Title = styled.header`
  display: flex;
  align-items: center;
  height: 32px;
  padding: 0 8px 0 5px;
  background: #fff200;
  color: #000;
`

const TitleText = styled.span`
  flex: 1;
  padding-left: 8px;
`

const WindowButtons = styled.div`
  display: flex;
  align-items: center;
  gap: 32px;
  button:last-child { margin-left: -8px; }
`

const MenuBar = styled.nav`
  display: flex;
  height: 30px;
  padding-left: 13px;
  gap: 26px;
  background: #323232;
`

const Bar = styled.div`
  display: flex;
  align-items: center;
  gap: 6px;
  height: 44px;
  padding-left: 5px;
  border-bottom: 1px solid #464646;
`

const PropBar = styled(Bar)`
  height: 63px;
  padding-top: 2px;
`

const Sep = styled.i`
  width: 1px;
  height: ${p => (p.$tall ? 53 : 34)}px;
  margin: 0 1px;
  background: #464646;
`

const ToolButton = styled.button`
  position: relative;
  flex: none;
  width: 34px;
  height: 34px;
  color: ${p => (p.$dim ? '#464646' : '#cdcdcd')};
  ${p => p.$hot && css`background: #5a4636;`}
  ${p => p.$active && css`
    background: #0f0f0f;
    border: 1px solid #5a5a5a;
  `}
  ${p => p.$flyout && css`
    &::after {
      content: '';
      position: absolute;
      right: 0;
      bottom: 0;
      border: 3px solid;
      border-color: transparent #cdcdcd #cdcdcd transparent;
    }
  `}
`

const WideButton = styled.button`
  gap: 12px;
  width: 58px;
  height: 34px;
  color: ${p => (p.$dim ? '#464646' : '#cdcdcd')};
  background: ${p => (p.$hot ? '#5a4636' : 'none')};
`

const Caret = styled.i`
  flex: none;
  width: ${p => (p.$small ? 8 : 12)}px;
  height: ${p => (p.$small ? 4 : 6)}px;
  background: currentColor;
  clip-path: ${p => (p.$up ? 'polygon(50% 0, 100% 100%, 0 100%)' : 'polygon(0 0, 100% 0, 50% 100%)')};
`

const ZoomBox = styled.div`
  display: flex;
  width: 129px;
  height: 34px;
  border: 1px solid #5a5a5a;
  input {
    flex: 1;
    min-width: 0;
    padding-left: 5px;
    background: #0f0f0f;
  }
  button {
    width: 26px;
    border-left: 1px solid #5a5a5a;
    background: #323232;
  }
`

const SnapButton = styled.button`
  gap: 12px;
  width: 93px;
  height: 34px;
`

const LaunchButton = styled.button`
  gap: 10px;
  width: 126px;
  height: 34px;
  padding: 0 7px 0 5px;
  background: #5a4636;
  span { flex: 1; text-align: left; }
`

const SelectBox = styled.div`
  display: flex;
  align-items: center;
  width: ${p => p.$width}px;
  height: 34px;
  padding-right: 5px;
  border: 1px solid #5a5a5a;
  background: #323232;
  select {
    flex: 1;
    min-width: 0;
    height: 100%;
    padding-left: 5px;
    appearance: none;
    outline: none;
  }
`

const SpinBox = styled.div`
  display: flex;
  border: 1px solid #5a5a5a;
`

const SpinInput = styled.input`
  width: ${p => p.$width}px;
  padding-left: 5px;
  background: #0f0f0f;
  border-right: 1px solid #5a5a5a;
`

const SpinButtons = styled.div`
  display: flex;
  background: #323232;
  button { width: 18px; }
  ${p => p.$stacked && css`
    flex-direction: column-reverse;
    width: 24px;
    button { width: 24px; flex: 1; }
  `}
`

const PairGrid = styled.div`
  display: grid;
  grid-template: 24px 24px / auto auto;
  align-items: center;
  column-gap: 4px;
  padding-left: 4px;
  ${SpinBox} { height: 24px; }
`

const UnitsLabel = styled.label`
  display: flex;
  align-items: center;
  justify-content: space-between;
  width: 183px;
  padding-left: 3px;
`

const NudgeBox = styled.div`
  display: flex;
  align-items: center;
  gap: 4px;
  padding-left: 4px;
  ${SpinBox} { height: 34px; }
`

const AddTool = styled.button`
  flex: none;
  color: #5a5a5a;
  ${p => (p.$vertical || p.$docker ? css`width: 100%;` : css`margin-left: 10px;`)}
  ${p => p.$vertical && css`height: 48px;`}
  ${p => p.$docker && css`height: 80px;`}
`

const BarEnd = styled.div`
  display: flex;
  align-items: center;
  gap: 16px;
  margin-left: auto;
  padding-right: 13px;
  color: #5a5a5a;
`

const Splitter = styled.div`
  width: 5px;
  height: ${p => (p.$short ? '57px' : 'auto')};
  border: solid #0f0f0f;
  border-width: 0 2px;
  background: #464646;
`

const Main = styled.main`
  flex: 1;
  display: grid;
  grid-template-columns: 44px minmax(0, 1fr) 5px 406px 30px;
`

const ToolboxBar = styled.div`
  display: flex;
  flex-direction: column;
  align-items: center;
  gap: 6px;
  padding: 5px 0 0 1px;
  border-right: 1px solid #464646;
`

const HSep = styled.i`
  width: 34px;
  height: 1px;
  margin: 1px 0;
  background: #464646;
`

const Document = styled.section`
  display: flex;
  flex-direction: column;
  min-width: 0;
`

const DocTabs = styled.div`
  display: flex;
  height: 29px;
  background: #323232;
  border-bottom: 1px solid #4a88cc;
`

const DocTab = styled.button`
  width: ${p => p.$width}px;
  justify-content: ${p => (p.$plus ? 'center' : 'flex-start')};
  gap: 11px;
  padding-left: ${p => (p.$plus ? 0 : 4)}px;
  background: ${p => (p.$active ? '#00468c' : '#464646')};
  color: ${p => (p.$plus ? '#646464' : '#cdcdcd')};
`

const RulerRow = styled.div`
  display: flex;
  height: 25px;
`

const Corner = styled.div`
  display: grid;
  place-items: center;
  width: 24px;
`

const HRulerBox = styled.div`
  position: relative;
  flex: 1;
  display: flex;
  min-width: 0;
  padding-left: 1px;
  border-bottom: 1px solid #b4b4b4;
`

const RulerSvg = styled.svg`
  flex: 1;
  display: block;
  width: 100%;
  height: 100%;
  fill: #b4b4b4;
  font-size: 12px;
  shape-rendering: crispEdges;
  line {
    stroke: #fff;
    stroke-dasharray: 4 2;
  }
`

const RulerUnit = styled.span`
  position: absolute;
  right: 0;
  top: 0;
  padding: 0 4px;
  font-size: 12px;
  line-height: 18px;
  color: #b4b4b4;
  background: #222222;
`

const Workspace = styled.div`
  flex: 1;
  display: flex;
`

const VRulerBox = styled.div`
  width: 25px;
  border-right: 1px solid #b4b4b4;
`

const CanvasColumn = styled.div`
  flex: 1;
  display: flex;
  flex-direction: column;
  min-width: 0;
  background: #464646;
`

const Canvas = styled.div`
  flex: 1;
  display: flex;
  justify-content: flex-end;
`

const VScroll = styled.div`
  display: flex;
  flex-direction: column;
  width: 25px;
`

const ScrollButton = styled.button`
  flex: none;
  width: ${p => (p.$wide ? 26 : 25)}px;
  height: 25px;
  border: 1px solid #fff;
  background: #000;
  color: #fff;
`

const bars = css`
  display: flex;
  align-items: center;
  justify-content: center;
  gap: 1px;
  i { background: #fff; }
`

const VThumb = styled.div`
  ${bars}
  flex-direction: column;
  height: 45px;
  border: 1px solid #fff;
  background: #000;
  i { width: 12px; height: 4px; }
`

const HThumb = styled.div`
  ${bars}
  width: 93px;
  height: 25px;
  margin-right: 1px;
  border: 1px solid #fff;
  background: #000;
  i { width: 4px; height: 12px; }
`

const PageRow = styled.div`
  display: flex;
  height: 26px;
`

const PageNav = styled.div`
  display: flex;
  align-items: center;
  gap: 8px;
  width: 224px;
  padding-left: 3px;
  background: #222222;
  border-top: 1px solid #b4b4b4;
  span { margin-right: 2px; white-space: nowrap; }
  button:disabled { color: #505050; }
`

const PageTabs = styled.div`
  display: flex;
  width: 453px;
  overflow: hidden;
  background: #222222;
`

const PageTab = styled.button`
  position: relative;
  flex: none;
  width: 69px;
  color: ${p => (p.$active ? '#dcdcdc' : '#9b9b9b')};
  z-index: ${p => (p.$active ? 1 : 0)};
  span { position: relative; padding-left: 9px; }
`

const TabShape = styled.svg`
  position: absolute;
  left: 0;
  top: 0;
  width: 79px;
  height: 26px;
  fill: none;
  stroke: #b4b4b4;
  .face { fill: #464646; stroke: none; }
`

const ZoomCorner = styled.button`
  width: 25px;
`

const Grip = styled.i`
  flex: none;
  width: ${p => p.$w}px;
  height: ${p => p.$h}px;
  background:
    radial-gradient(#5a5a5a 1px, transparent 1px) 0 0 / 6px 6px,
    radial-gradient(#5a5a5a 1px, transparent 1px) 3px 3px / 6px 6px #222222;
`

const DocPalette = styled.div`
  display: flex;
  align-items: center;
  gap: 8px;
  height: 31px;
  padding: 0 15px 0 3px;
  border-top: 1px solid #464646;
`

const DimButton = styled.button`
  color: ${p => (p.$light ? '#787878' : '#5a5a5a')};
  ${p => p.$spaced && css`margin-top: 6px;`}
`

const SwatchRow = styled.div`
  display: flex;
  border-left: 1px solid #5a5a5a;
  border-top: 1px solid #5a5a5a;
`

const Swatch = styled.button`
  flex: none;
  width: 25px;
  height: 25px;
  border: solid #5a5a5a;
  border-width: 0 1px 1px 0;
  background: ${p => p.$color};
`

const CrossSvg = styled.svg`
  width: 100%;
  height: 100%;
  stroke: #222;
  stroke-width: 1;
`

const Docker = styled.aside`
  display: flex;
  flex-direction: column;
  border-right: 1px solid #464646;
`

const DockerHead = styled.div`
  display: flex;
  align-items: center;
  gap: 11px;
  height: 29px;
  padding: 0 6px 0 3px;
  background: #323232;
  border-bottom: 1px solid #5a5a5a;
  color: #6e6e6e;
  h2 {
    flex: 1;
    margin: 0;
    font-size: 15px;
    font-weight: 400;
    color: #cdcdcd;
  }
`

const DockerBody = styled.div`
  flex: 1;
  display: flex;
`

const Panel = styled.div`
  flex: 1;
  display: flex;
  flex-direction: column;
  padding: 0 7px 0 5px;
`

const PanelTools = styled.div`
  display: flex;
  align-items: center;
  gap: 5px;
  height: 49px;
  padding: 2px 3px 0 0;
`

const Current = styled.div`
  flex: 1;
  padding-left: 11px;
`

const Tree = styled.div`
  position: relative;
  display: flex;
  border: solid #fff;
  border-width: 2px 2px 0 1px;
`

const Rows = styled.ul`
  flex: 1;
  min-width: 0;
  margin: 0;
  padding: 0;
  list-style: none;
  span { padding-bottom: 2px; }
`

const PageItem = styled.li`
  display: flex;
  align-items: center;
  height: 24px;
  padding-left: 6px;
  border-bottom: 1px solid #cdd6e0;
  background: #003c78;
  font-weight: 700;
  span { padding-left: 8px; }
  svg { margin-left: 14px; }
`

const Expander = styled.button`
  flex: none;
  width: 13px;
  height: 13px;
  border: 1px solid ${p => (p.$blue ? '#9fc0e4' : '#cdcdcd')};
  visibility: ${p => (p.$leaf ? 'hidden' : 'visible')};
  background:
    linear-gradient(#e6e6e6, #e6e6e6) center / 7px 1px no-repeat,
    linear-gradient(#e6e6e6, #e6e6e6) center / 1px ${p => (p.$minus ? 1 : 7)}px no-repeat;
`

const LayerItem = styled.li`
  display: flex;
  align-items: center;
  height: 24px;
  padding-left: 33px;
  border-bottom: 1px solid #dcdcdc;
  background: #0f0f0f;
  color: #3c8cdc;
  font-style: ${p => (p.$italic ? 'italic' : 'normal')};
  white-space: nowrap;
  overflow: hidden;
`

const LayerFlags = styled.div`
  display: flex;
  gap: 8px;
  padding: 0 12px 0 15px;
  color: #cdcdcd;
`

const LayerColor = styled.i`
  flex: none;
  width: 16px;
  height: 17px;
  margin-right: 10px;
  background: ${p => p.$color};
`

const TreeScroll = styled.div`
  display: flex;
  flex-direction: column;
  width: 25px;
  border-left: 1px solid #fff;
  border-bottom: 1px solid #fff;
  background: #000;
  color: #fff;
  button { height: 24px; }
  button:first-child { border-bottom: 1px solid #fff; }
`

const TreeThumb = styled.div`
  ${bars}
  flex: 423 1 0;
  flex-direction: column;
  border: solid #fff;
  border-width: 1px 0;
  i { width: 12px; height: 4px; }
`

// marks the visibility / print / lock columns of the master layers
const Highlight = styled.div`
  position: absolute;
  left: 45px;
  bottom: -10px;
  width: 95px;
  height: 285px;
  border: 11px solid #ffee00;
  pointer-events: none;
`

const PanelFoot = styled.div`
  display: flex;
  gap: 15px;
  padding: 10px 11px 0 5px;
  button:disabled { color: #464646; }
  button:last-child { margin-left: auto; }
`

const DockerTabs = styled.div`
  display: flex;
  flex-direction: column;
  width: 29px;
  border-left: 1px solid #4a88cc;
  background: #323232;
`

const SideTab = styled.button`
  flex: none;
  height: ${p => p.$height}px;
  ${p => (p.$height > 38 ? css`
    flex-direction: column;
    justify-content: flex-start;
    gap: 8px;
    padding-top: 7px;
  ` : '')}
  background: ${p => (p.$active ? '#00468c' : '#464646')};
  border-bottom: 1px solid #323232;
  span { writing-mode: vertical-rl; }
`

const Palette = styled.div`
  display: flex;
  flex-direction: column;
  align-items: center;
  gap: 6px;
  padding: 3px 2px 0 2px;
`

const SwatchColumn = styled.div`
  width: 26px;
  height: 642px;
  overflow: hidden;
  border-left: 1px solid #5a5a5a;
  border-top: 1px solid #5a5a5a;
`

const Status = styled.footer`
  display: flex;
  align-items: center;
  height: 52px;
  padding: 0 10px;
  border-top: 1px solid #464646;
  > button { margin-left: 32px; }
`

const StatusFill = styled.div`
  display: flex;
  align-items: center;
  gap: 3px;
  width: 295px;
  margin-left: 24px;
`

const BigSwatch = styled.i`
  width: 30px;
  height: 30px;
  margin-right: 3px;
  border: 1px solid #5a5a5a;
  background: ${p => p.$color};
`

const StatusOutline = styled.div`
  display: flex;
  align-items: center;
  gap: 2px;
  width: 324px;
  height: 34px;
  padding-left: 14px;
  border-left: 1px solid #464646;
`

export default App
